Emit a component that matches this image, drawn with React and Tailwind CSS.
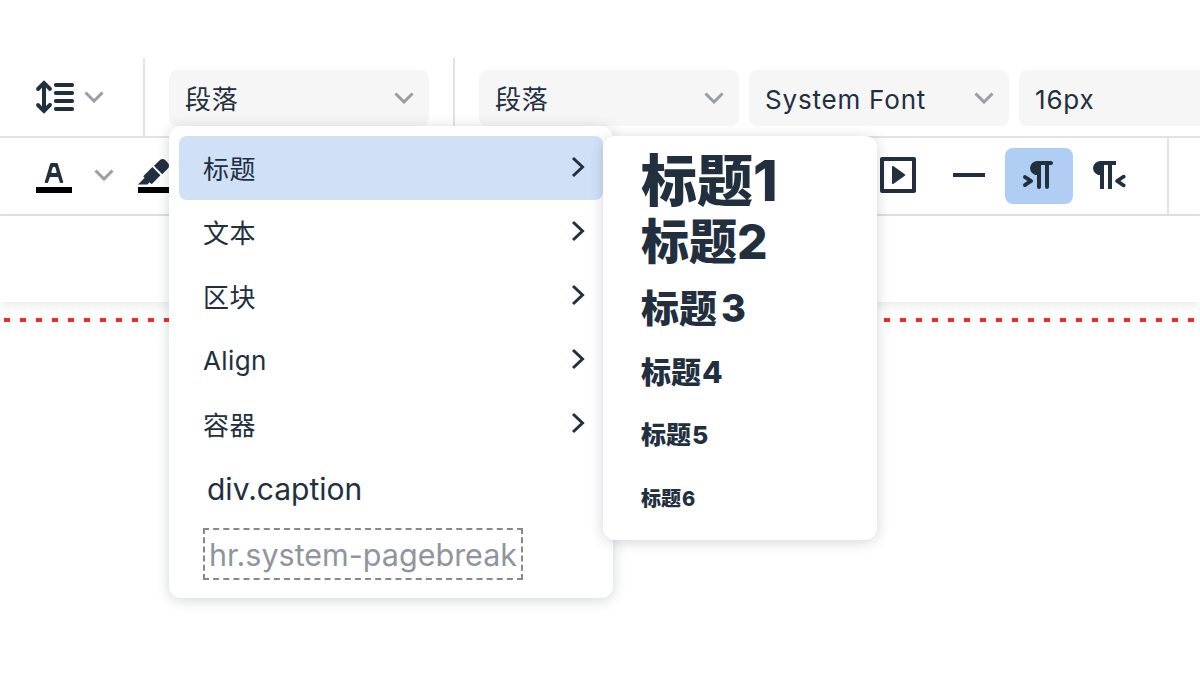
import React from "react";

const CJK = "font-['Inter','Noto_Sans_CJK_SC',sans-serif]";

const Icon = ({ d, className = "" }) => (
  <svg viewBox="0 0 24 24" className={`w-12 h-12 fill-[#222f3e] shrink-0 ${className}`}>
    <path d={d} />
  </svg>
);

const Chevron = ({ className = "" }) => (
  <svg viewBox="0 0 20 12" className={`w-5 h-3 shrink-0 ${className}`}>
    <path d="M1.5 1.5L10 10l8.5-8.5" fill="none" stroke="#9a9da3" strokeWidth="3" />
  </svg>
);

const ChevronRight = () => (
  <svg viewBox="0 0 14 22" className="w-3.5 h-[22px] shrink-0 mb-0.5">
    <path d="M2 2l9.5 9L2 20" fill="none" stroke="#222f3e" strokeWidth="3" />
  </svg>
);

const Select = ({ label, width, chevron = true }) => (
  <div className={`h-14 ${width} rounded-lg bg-[#f6f6f6] flex items-center justify-between pl-4 pr-[15px] text-[26px] tracking-[0.8px] text-[#222f3e] shrink-0`}>
    <span className="mt-0.5">{label}</span>
    {chevron && <Chevron />}
  </div>
);

const icons = {
  lineHeight:
    "M21 5a1 1 0 0 1 .1 2H13a1 1 0 0 1-.1-2H21zm0 4a1 1 0 0 1 .1 2H13a1 1 0 0 1-.1-2H21zm0 4a1 1 0 0 1 .1 2H13a1 1 0 0 1-.1-2H21zm0 4a1 1 0 0 1 .1 2H13a1 1 0 0 1-.1-2H21zM7 3.6l3.7 3.7a1 1 0 0 1-1.3 1.5h-.1L8 7.3v9.2l1.3-1.3a1 1 0 0 1 1.3 0h.1c.4.4.4 1 0 1.3v.1L7 20.4l-3.7-3.7a1 1 0 0 1 1.3-1.5h.1L6 16.7V7.4L4.7 8.7a1 1 0 0 1-1.3 0h-.1a1 1 0 0 1 0-1.3v-.1L7 3.6z",
  letter:
    "M8.7 16h-.8a.5.5 0 0 1-.5-.6l2.7-9c.1-.3.3-.4.5-.4h2.8c.2 0 .4.1.5.4l2.7 9a.5.5 0 0 1-.5.6h-.8a.5.5 0 0 1-.4-.4l-.7-2.2c0-.3-.3-.4-.5-.4h-3.4c-.2 0-.4.1-.5.4l-.7 2.2c0 .3-.2.4-.4.4zm2.6-7.6l-.6 2a.5.5 0 0 0 .5.6h1.6a.5.5 0 0 0 .5-.6l-.6-2c0-.3-.3-.4-.5-.4h-.4c-.2 0-.4.1-.5.4z",
  marker:
    "M7.7 16.7H3l3.3-3.3-.7-.8L10.2 8l4 4.1-4 4.2c-.2.2-.6.2-.8 0l-.6-.7-1.1 1.1zm5-7.5L11 7.4l3-2.9a2 2 0 0 1 2.6 0L18 6c.7.7.7 2 0 2.7l-2.9 2.9-1.8-1.8-.5-.6z",
  media:
    "M4 3h16c.6 0 1 .4 1 1v16c0 .6-.4 1-1 1H4a1 1 0 0 1-1-1V4c0-.6.4-1 1-1zm1 2v14h14V5H5zm4.8 2.6l5.6 4a.5.5 0 0 1 0 .8l-5.6 4A.5.5 0 0 1 9 16V8a.5.5 0 0 1 .8-.4z",
  hr: "M4 11h16v2H4z",
  ltr: "M11 5h7a1 1 0 0 1 0 2h-1v11a1 1 0 0 1-2 0V7h-2v11a1 1 0 0 1-2 0v-6c-.5 0-1 0-1.4-.3A3.4 3.4 0 0 1 7.8 10a3.3 3.3 0 0 1 0-2.8 3.4 3.4 0 0 1 1.8-1.8L11 5zM4.4 16.2L6.2 15l-1.8-1.2a1 1 0 0 1 1.2-1.6l3 2a1 1 0 0 1 0 1.6l-3 2a1 1 0 1 1-1.2-1.6z",
  rtl: "M8 5h8v2h-2v12h-2V7h-2v12H8v-7c-.5 0-1 0-1.4-.3A3.4 3.4 0 0 1 4.8 10a3.3 3.3 0 0 1 0-2.8 3.4 3.4 0 0 1 1.8-1.8L8 5zm12 11.2a1 1 0 1 1-1 1.6l-3-2a1 1 0 0 1 0-1.6l3-2a1 1 0 1 1 1 1.6L18.2 15l1.8 1.2z",
};

const ColorIcon = ({ d, className = "" }) => (
  <svg viewBox="0 0 24 24" className={`w-12 h-12 shrink-0 ${className}`}>
    <path d={d} fill="#222f3e" />
    <path d="M3 18h18v3H3z" fill="#000" />
  </svg>
);

const menuItems = ["标题", "文本", "区块", "Align", "容器"];

const headings = [
  { label: "标题", num: "1", size: "text-[56px]", h: "h-[58px]", numClass: "" },
  { label: "标题", num: "2", size: "text-[48px]", h: "h-[64px]", numClass: "" },
  { label: "标题", num: "3", size: "text-[38px]", h: "h-[66px] pt-0.5", numClass: "ml-1" },
  { label: "标题", num: "4", size: "text-[30px]", h: "h-[64px]", numClass: "ml-px" },
  { label: "标题", num: "5", size: "text-[25px]", h: "h-[63px]", numClass: "ml-px" },
  { label: "标题", num: "6", size: "text-[20px]", h: "h-[63px]", numClass: "ml-px" },
];

export default function App() {
  return (
    <div className={`relative w-[1200px] h-[676px] overflow-hidden bg-white text-[#222f3e] ${CJK}`}>
      <div className="h-[58px]" />

      {/* first toolbar row */}
      <div className="h-[80px] flex border-b-2 border-[#e3e3e3]">
        <div className="w-[145px] shrink-0 border-r-2 border-[#e3e3e3] flex items-start pl-[30px] pt-[15px]">
          <Icon d={icons.lineHeight} />
          <Chevron className="ml-1.5 mt-[18px]" />
        </div>
        <div className="w-[310px] shrink-0 border-r-2 border-[#e3e3e3] pl-6 pt-3">
          <Select label="段落" width="w-[260px]" />
        </div>
        <div className="flex gap-2.5 pl-6 pt-3">
          <Select label="段落" width="w-[260px]" />
          <Select label="System Font" width="w-[260px]" />
          <Select label="16px" width="w-[260px]" chevron={false} />
        </div>
      </div>

      {/* second toolbar row */}
      <div className="h-[78px] flex border-b-2 border-[#e3e3e3]">
        <div className="w-[1169px] shrink-0 border-r-2 border-[#e3e3e3] flex items-center pl-[30px] pb-[2px]">
          <ColorIcon d={icons.letter} />
          <Chevron className="ml-4 mb-px" />
          <ColorIcon d={icons.marker} className="ml-[18px]" />
          <div className="w-[694px] shrink-0" />
          <Icon d={icons.media} />
          <Icon d={icons.hr} className="ml-[23px]" />
          <div className="ml-3 mt-0.5 w-[68px] h-14 rounded-lg bg-[#b0cef4] flex items-center justify-center">
            <Icon d={icons.ltr} className="mb-0.5" />
          </div>
          <Icon d={icons.rtl} className="ml-[11px]" />
        </div>
      </div>

      {/* third toolbar row */}
      <div className="h-[86px] shadow-[0_3px_10px_rgba(34,47,62,0.1)]" />

      {/* editor body */}
      <div className="mt-4 h-1 bg-[repeating-linear-gradient(90deg,transparent_0_4px,#ee2b24_4px_10px,transparent_10px_16px)]" />

      {/* format menu */}
      <div className="absolute left-[169px] top-[126px] w-[444px] h-[472px] rounded-xl bg-white p-2.5 shadow-[0_2px_14px_rgba(34,47,62,0.2)]">
        {menuItems.map((item, i) => (
          <div
            key={item}
            className={`h-16 rounded-lg pl-6 pr-[18px] flex items-center justify-between text-[26px] tracking-[0.4px] ${i === 0 ? "bg-[#cfe0f7]" : ""}`}
          >
            <span className={item === "Align" ? "" : "mt-0.5"}>{item}</span>
            <ChevronRight />
          </div>
        ))}
        <div className="h-16 pl-7 pt-0.5 flex items-center text-[30px]">div.caption</div>
        <div className="ml-6 mt-2 w-[320px] h-[52px] border-2 border-dashed border-[#86888c] flex items-center justify-center pt-0.5 text-[30.5px] text-[#8f959e] whitespace-nowrap">
          hr.system-pagebreak
        </div>
      </div>

      {/* heading submenu */}
      <div className="absolute left-[603px] top-[136px] w-[274px] h-[404px] rounded-xl bg-white pl-[38px] pt-4 shadow-[0_2px_14px_rgba(34,47,62,0.2)]">
        {headings.map((h) => (
          <div key={h.num} className={`${h.h} ${h.size} font-extrabold flex items-center whitespace-nowrap`}>
            <span>{h.label}</span>
            <span className={h.numClass}>{h.num}</span>
          </div>
        ))}
      </div>
    </div>
  );
}
